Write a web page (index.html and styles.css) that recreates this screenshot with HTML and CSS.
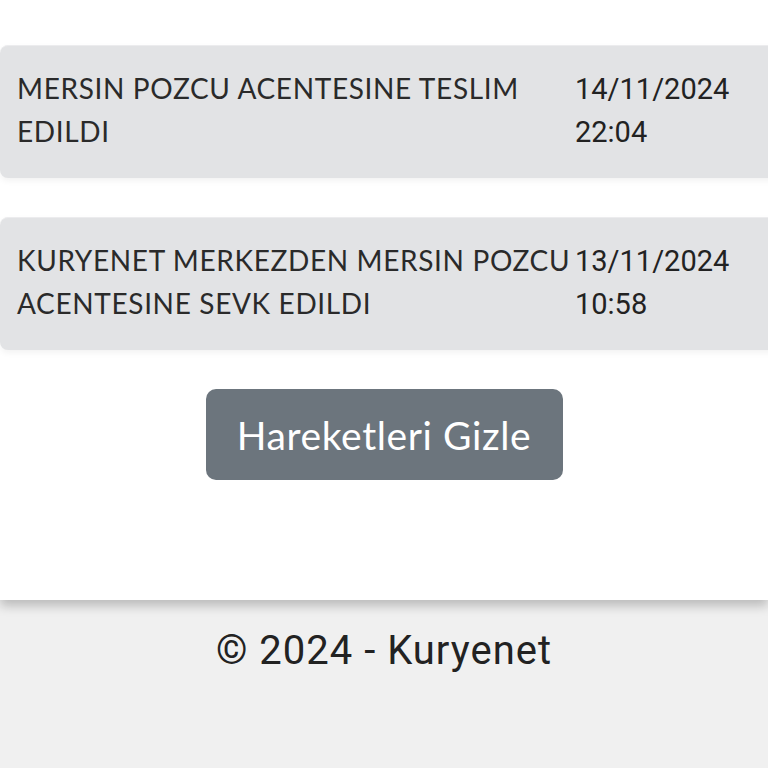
FILE: index.html
```html
<!DOCTYPE html>
<html lang="tr">
  <head>
    <meta charset="UTF-8" />
    <meta name="viewport" content="width=device-width, initial-scale=1.0" />
    <title>Kuryenet - Gönderi Hareketleri</title>
    <link rel="stylesheet" href="styles.css">
  </head>
  <body>
    <div class="main-content">
      <div class="movement-list">
        <div class="movement-item">
          <div class="movement-text">MERSIN POZCU ACENTESINE TESLIM EDILDI</div>
          <div class="movement-date">14/11/2024<br>22:04</div>
        </div>

        <div class="movement-item">
          <div class="movement-text">KURYENET MERKEZDEN MERSIN POZCU ACENTESINE SEVK EDILDI</div>
          <div class="movement-date">13/11/2024<br>10:58</div>
        </div>
      </div>

      <div class="toggle-button">
        <button id="toggle-movements">Hareketleri Gizle</button>
      </div>
    </div>

    <footer class="footer">
      &copy; 2024 - Kuryenet
    </footer>
  </body>
</html>
```

FILE: styles.css
```css
body {
  font-family: Lato, "Noto Sans", sans-serif;
  background-color: #f0f0f0;
  color: #222;
  margin: 0;
  padding: 0;
  overflow: hidden;
}

.main-content {
  background-color: #fff;
  height: 600px;
  padding-top: 45px;
  box-sizing: border-box;
  overflow: hidden;
  box-shadow: 0 6px 10px rgba(0, 0, 0, 0.22);
  position: relative;
}

.movement-list {
  display: flex;
  flex-direction: column;
  gap: 39px;
  margin-right: -12px;
}

.movement-item {
  display: flex;
  background-color: #e2e3e5;
  border-top: 1px solid #ececee;
  border-radius: 8px;
  padding: 21px 0 24px 17px;
  box-shadow: 0 3px 6px rgba(0, 0, 0, 0.05);
  font-size: 28px;
  line-height: 43px;
}

.movement-text {
  width: 556px;
  flex-shrink: 0;
  letter-spacing: 0.65px;
  color: #2a2a2a;
}

.movement-date {
  font-family: Roboto, sans-serif;
  font-size: 29px;
  padding-left: 2px;
  margin-top: 1px;
}

.toggle-button {
  margin-top: 39px;
  text-align: center;
}

.toggle-button button {
  width: 357px;
  height: 91px;
  background-color: #6c757d;
  color: #fff;
  border: none;
  border-radius: 10px;
  font-family: Lato, sans-serif;
  font-size: 39px;
  letter-spacing: 0.6px;
  cursor: pointer;
}

.footer {
  text-align: center;
  font-family: Roboto, sans-serif;
  font-size: 40px;
  letter-spacing: 1px;
  padding-top: 27px;
  color: #222;
}
```
